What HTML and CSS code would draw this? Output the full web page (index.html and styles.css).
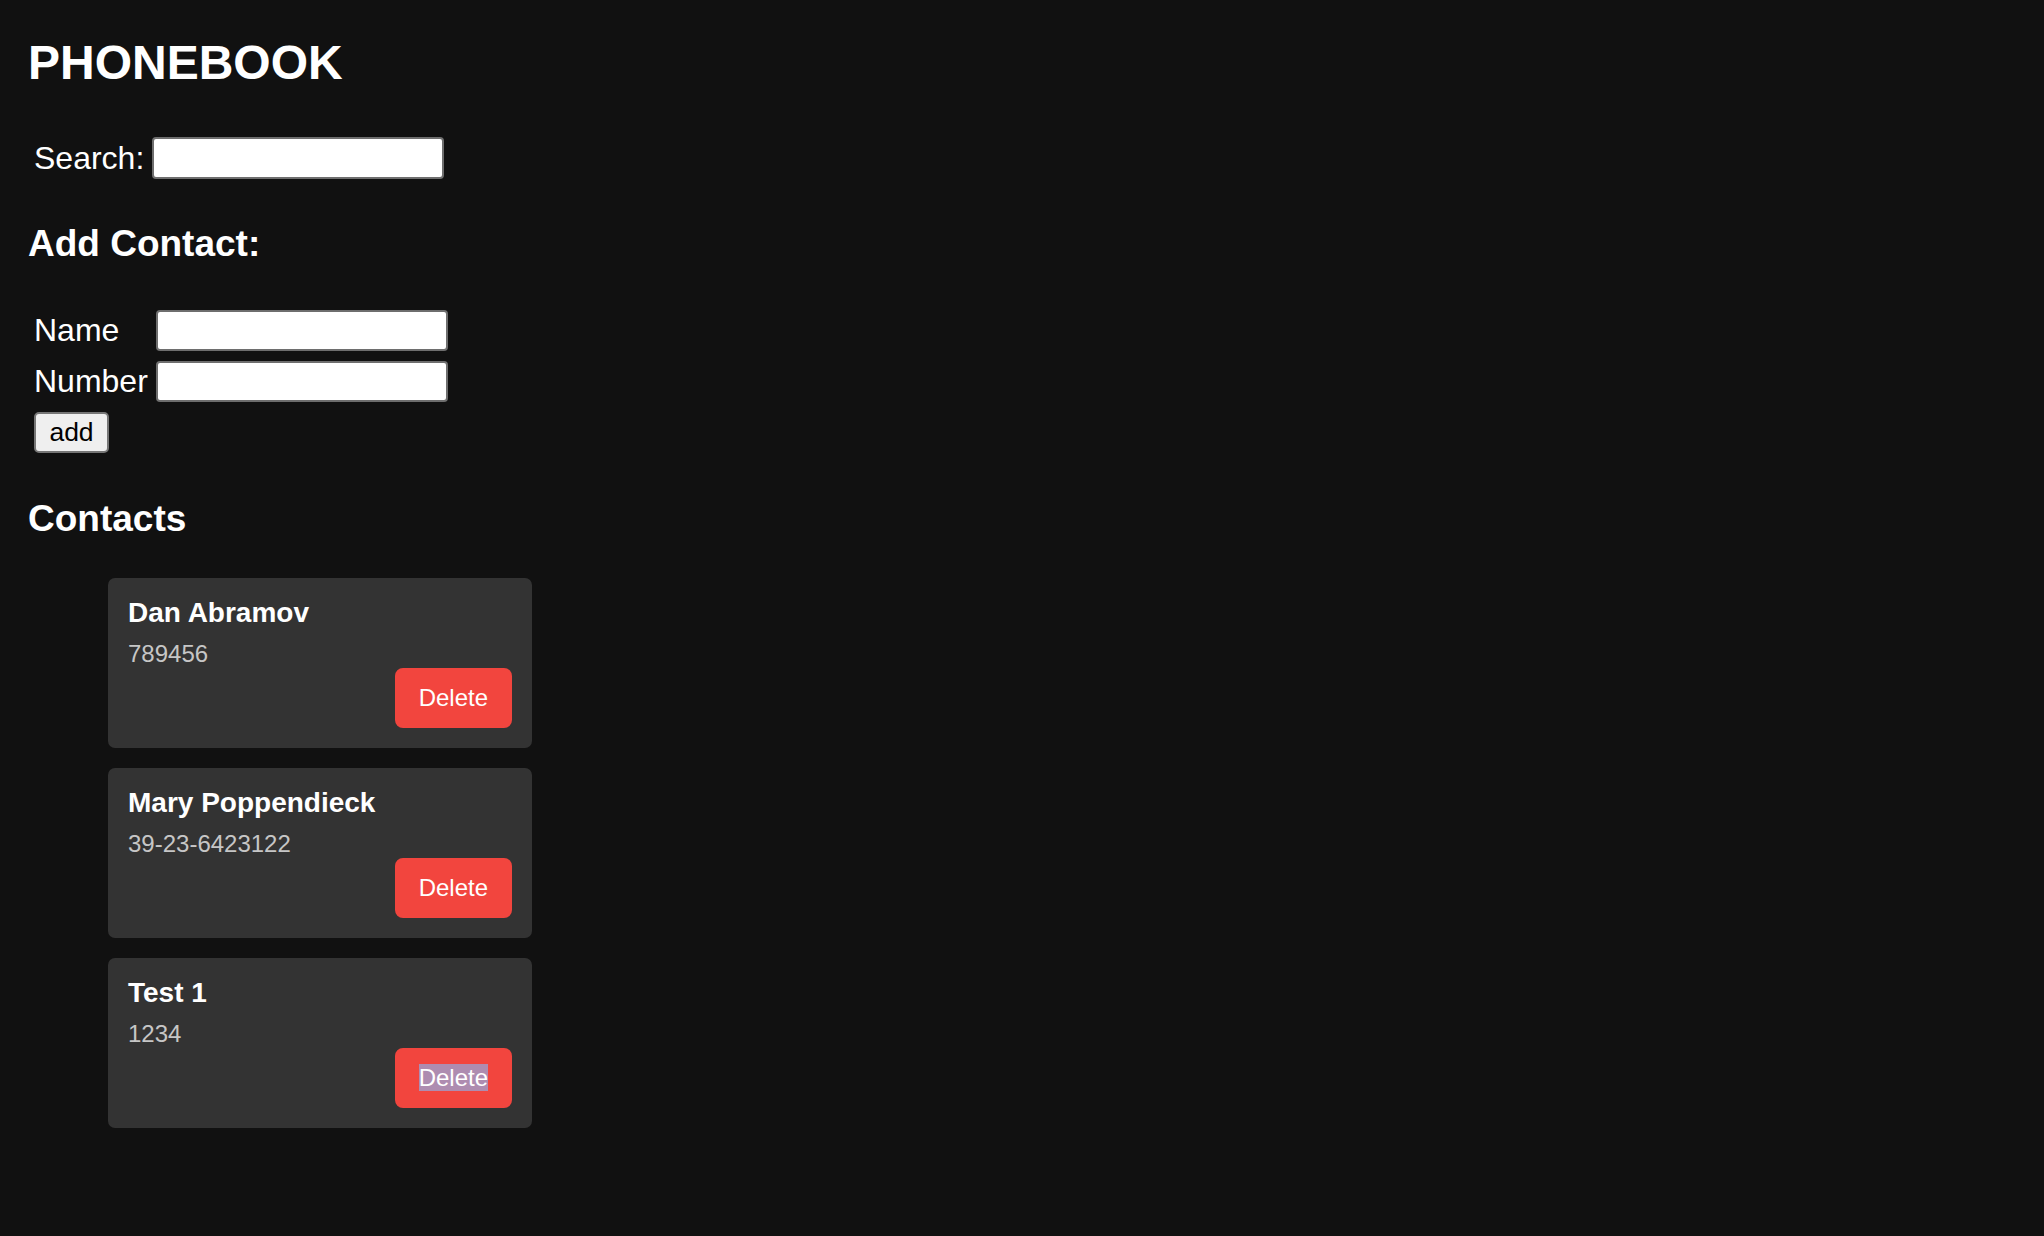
FILE: index.html
```html
<!DOCTYPE html>
<html lang="en">
<head>
<meta charset="utf-8">
<title>Phonebook</title>
<link rel="stylesheet" href="styles.css">
</head>
<body>
<div class="app">
  <h1 class="title">PHONEBOOK</h1>
  <div class="search">
    <label class="search-label" for="search">Search:</label>
    <input class="field" id="search" type="text">
  </div>
  <h2 class="heading add-heading">Add Contact:</h2>
  <form class="contact-form">
    <label class="form-label" for="name">Name</label>
    <input class="field" id="name" type="text">
    <label class="form-label" for="number">Number</label>
    <input class="field" id="number" type="text">
    <button class="add-btn" type="button">add</button>
  </form>
  <h2 class="heading contacts-heading">Contacts</h2>
  <ul class="contacts">
    <li class="card">
      <div class="card-name">Dan Abramov</div>
      <div class="card-number">789456</div>
      <button class="delete-btn" type="button">Delete</button>
    </li>
    <li class="card">
      <div class="card-name">Mary Poppendieck</div>
      <div class="card-number">39-23-6423122</div>
      <button class="delete-btn" type="button">Delete</button>
    </li>
    <li class="card">
      <div class="card-name">Test 1</div>
      <div class="card-number">1234</div>
      <button class="delete-btn" type="button"><span class="selected">Delete</span></button>
    </li>
  </ul>
</div>
</body>
</html>
```

FILE: styles.css
```css
html, body {
  margin: 0;
  padding: 0;
  background: #111111;
}

body {
  font-family: "Liberation Sans", Arial, Helvetica, sans-serif;
  color: #ffffff;
}

.app {
  padding: 35px 0 40px 28px;
}

.title {
  margin: 0;
  font-size: 48px;
  line-height: 56px;
  font-weight: 700;
}

.search {
  display: flex;
  align-items: center;
  gap: 8px;
  margin-top: 46px;
  padding-left: 6px;
}

.search-label {
  font-size: 32px;
  line-height: 42px;
}

.field {
  box-sizing: border-box;
  width: 292px;
  height: 42px;
  margin: 0;
  padding: 0 6px;
  background: #ffffff;
  border: 2px solid #6e6e6e;
  border-radius: 4px;
  font-family: "Liberation Sans", Arial, sans-serif;
  font-size: 26px;
}

.heading {
  margin: 0;
  font-size: 37px;
  line-height: 42px;
  font-weight: 700;
}

.add-heading {
  margin-top: 44px;
}

.contact-form {
  display: grid;
  grid-template-columns: auto 292px;
  grid-auto-rows: 41px;
  column-gap: 8px;
  row-gap: 10px;
  justify-content: start;
  align-items: center;
  margin-top: 45px;
  padding-left: 6px;
}

.contact-form .field {
  height: 41px;
}

.form-label {
  font-size: 32px;
  line-height: 41px;
}

.add-btn {
  grid-column: 1;
  justify-self: start;
  box-sizing: border-box;
  width: 75px;
  height: 41px;
  margin: 0;
  padding: 0;
  background: #efefef;
  color: #000000;
  border: 2px solid #767676;
  border-radius: 5px;
  font-family: "Liberation Sans", Arial, sans-serif;
  font-size: 26.5px;
}

.contacts-heading {
  margin-top: 45px;
}

.contacts {
  list-style: none;
  margin: 38px 0 0 0;
  padding: 0 0 0 80px;
  display: flex;
  flex-direction: column;
  gap: 20px;
}

.card {
  box-sizing: border-box;
  width: 424px;
  display: flex;
  flex-direction: column;
  padding: 19px 20px 20px 20px;
  background: #333333;
  border-radius: 7px;
}

.card-name {
  font-size: 28px;
  line-height: 32px;
  font-weight: 700;
  color: #ffffff;
}

.card-number {
  margin-top: 11px;
  font-size: 24px;
  line-height: 28px;
  color: #c6c6c6;
}

.delete-btn {
  align-self: flex-end;
  height: 60px;
  margin: 0;
  padding: 0 24px;
  background: #f2453e;
  color: #ffffff;
  border: none;
  border-radius: 8px;
  font-family: "Liberation Sans", Arial, sans-serif;
  font-size: 24px;
  line-height: 36px;
}

.selected {
  background: #ae8cb0;
}
```
